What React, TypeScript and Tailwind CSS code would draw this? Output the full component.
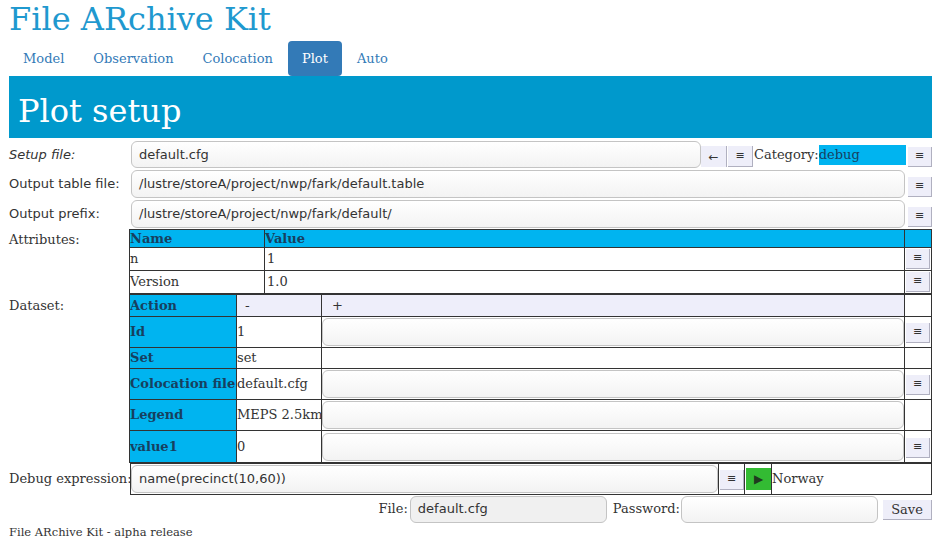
import React from "react";

const serif = "font-['DejaVu_Serif',serif]";
const sans = "font-['DejaVu_Sans',sans-serif]";

function MenuBtn({ className = "" }: { className?: string }) {
  return (
    <div
      className={`w-[24px] h-[20px] bg-[#eeeef9] border-r border-b border-[#b0b0c0] flex items-center justify-center text-[11px] text-[#333] ${sans} ${className}`}
    >
      ≡
    </div>
  );
}

function TextBox({ value = "", className = "" }: { value?: string; className?: string }) {
  return (
    <div
      className={`h-[27px] rounded-[6px] border border-[#c4c4c4] bg-gradient-to-b from-white to-[#f3f3f3] px-[7px] flex items-center text-[13px] text-[#333] whitespace-nowrap ${sans} ${className}`}
    >
      {value}
    </div>
  );
}

function FormRow({ label, value }: { label: string; value: string }) {
  return (
    <div className="flex items-center h-[30px]">
      <div className={`w-[121px] text-[13px] whitespace-nowrap ${sans}`}>{label}</div>
      <TextBox value={value} className="flex-1 ml-[1px] h-[28px]" />
      <div className="w-[27px] flex justify-end">
        <MenuBtn className="mt-[6px]" />
      </div>
    </div>
  );
}

const cell = "border border-[#333] p-0";
const head = "bg-[#00b4f0] text-[#17405f] font-bold";

const dataset = [
  { k: "Id", v: "1", input: true, btn: true, h: "h-[31px]" },
  { k: "Set", v: "set", input: false, btn: false, h: "h-[21px]" },
  { k: "Colocation file", v: "default.cfg", input: true, btn: true, h: "h-[31px]" },
  { k: "Legend", v: "MEPS 2.5km", input: true, btn: false, h: "h-[31px]" },
  { k: "value1", v: "0", input: true, btn: true, h: "h-[32px]" },
];

export default function App() {
  const tabs = ["Model", "Observation", "Colocation", "Plot", "Auto"];
  return (
    <div className={`${serif} text-[#333] pl-[9px] w-[932px] text-[13px]`}>
      <div className="h-[41px] pt-[1px] text-[32px] leading-[36px] text-[#1f99cf] whitespace-nowrap">
        File ARchive Kit
      </div>

      <div className="flex h-[35px]">
        {tabs.map((t) => (
          <div
            key={t}
            className={`px-[14px] mr-[1px] flex items-center text-[13px] rounded-[4px] ${
              t === "Plot" ? "bg-[#337ab7] text-white" : "text-[#337ab7]"
            }`}
          >
            {t}
          </div>
        ))}
      </div>

      <div className="h-[62px] bg-[#0099cc] text-white text-[32px] pl-[9px] pt-[15px] leading-[40px] whitespace-nowrap">
        Plot setup
      </div>

      {/* setup file */}
      <div className="flex items-center h-[31px] pt-[2px]">
        <div className={`w-[121px] italic ${sans}`}>Setup file:</div>
        <TextBox value="default.cfg" className="w-[570px] ml-[1px]" />
        <div className="flex items-center mt-[4px]">
          <div className={`w-[26px] h-[21px] bg-[#eeeef9] border-r border-[#b0b0c0] flex items-center justify-center text-[12px] ${sans}`}>
            ←
          </div>
          <MenuBtn className="h-[21px] w-[25px] ml-[1px]" />
        </div>
        <div className="ml-[1px]">Category:</div>
        <div className="w-[87px] h-[20px] bg-[#00b4f0] text-[#17405f] leading-[20px] mt-[1px]">debug</div>
        <div className="flex-1 flex justify-end">
          <MenuBtn className="mt-[4px]" />
        </div>
      </div>

      <FormRow label="Output table file:" value="/lustre/storeA/project/nwp/fark/default.table" />
      <FormRow label="Output prefix:" value="/lustre/storeA/project/nwp/fark/default/" />

      {/* attributes */}
      <div className="flex">
        <div className="w-[121px] pt-[1px]">Attributes:</div>
        <table className="border-collapse w-[802px] table-fixed">
          <colgroup>
            <col className="w-[135px]" />
            <col className="w-[640px]" />
            <col className="w-[27px]" />
          </colgroup>
          <tbody>
            <tr className={`h-[18px] ${head}`}>
              <td className={`${cell} leading-[16px]`}>Name</td>
              <td className={`${cell} leading-[16px]`}>Value</td>
              <td className={cell}></td>
            </tr>
            <tr className="h-[23px]">
              <td className={cell}>n</td>
              <td className={`${cell} pl-[2px]`}>1</td>
              <td className={cell}>
                <MenuBtn className="ml-[1px]" />
              </td>
            </tr>
            <tr className="h-[23px]">
              <td className={cell}>Version</td>
              <td className={`${cell} pl-[2px]`}>1.0</td>
              <td className={cell}>
                <MenuBtn className="ml-[1px]" />
              </td>
            </tr>
          </tbody>
        </table>
      </div>

      {/* dataset */}
      <div className="flex">
        <div className="w-[121px] pt-[2px]">Dataset:</div>
        <table className="border-collapse w-[802px] table-fixed">
          <colgroup>
            <col className="w-[107px]" />
            <col className="w-[85px]" />
            <col className="w-[583px]" />
            <col className="w-[27px]" />
          </colgroup>
          <tbody>
            <tr className="h-[22px]">
              <td className={`${cell} ${head}`}>Action</td>
              <td className={`${cell} bg-[#eeeefa] pl-[8px] ${sans}`}>-</td>
              <td className={`${cell} bg-[#eeeefa] pl-[10px] ${sans}`}>+</td>
              <td className={cell}></td>
            </tr>
            {dataset.map((r) => (
              <tr key={r.k} className={r.h}>
                <td className={`${cell} ${head} whitespace-nowrap overflow-hidden`}>{r.k}</td>
                <td className={`${cell} whitespace-nowrap overflow-hidden`}>{r.v}</td>
                <td className={cell}>{r.input && <TextBox className="h-[28px]" />}</td>
                <td className={cell}>{r.btn && <MenuBtn className="ml-[1px] mt-[2px]" />}</td>
              </tr>
            ))}
          </tbody>
        </table>
      </div>

      {/* debug expression */}
      <div className="flex">
        <div className="w-[121px] leading-[31px] whitespace-nowrap">Debug expression:</div>
        <table className="border-collapse w-[802px]">
          <tbody>
            <tr className="h-[31px]">
              <td className={`${cell} w-[588px]`}>
                <TextBox value="name(precinct(10,60))" className="h-[28px]" />
              </td>
              <td className={`${cell} w-[26px]`}>
                <MenuBtn className="ml-[1px] mt-[2px]" />
              </td>
              <td className={`${cell} w-[27px]`}>
                <div className="w-[25px] h-[22px] bg-[#33bb33] flex items-center justify-center text-[12px] text-[#1f3a1f] ml-[1px]">
                  ▶
                </div>
              </td>
              <td className={cell}>Norway</td>
            </tr>
          </tbody>
        </table>
      </div>

      {/* file / password */}
      <div className="flex items-center justify-end h-[28px]">
        <span className="mr-[2px]">File:</span>
        <TextBox value="default.cfg" className="w-[197px] bg-none bg-[#f0f0f0]" />
        <span className="ml-[6px] mr-[1px]">Password:</span>
        <TextBox className="w-[197px]" />
        <div className="ml-[5px] w-[49px] h-[20px] mt-[2px] bg-[#eeeef9] border-r border-b border-[#b0b0c0] flex items-center justify-center">
          Save
        </div>
      </div>

      <div className="text-[11.5px] mt-[1px] whitespace-nowrap">File ARchive Kit - alpha release</div>
    </div>
  );
}
